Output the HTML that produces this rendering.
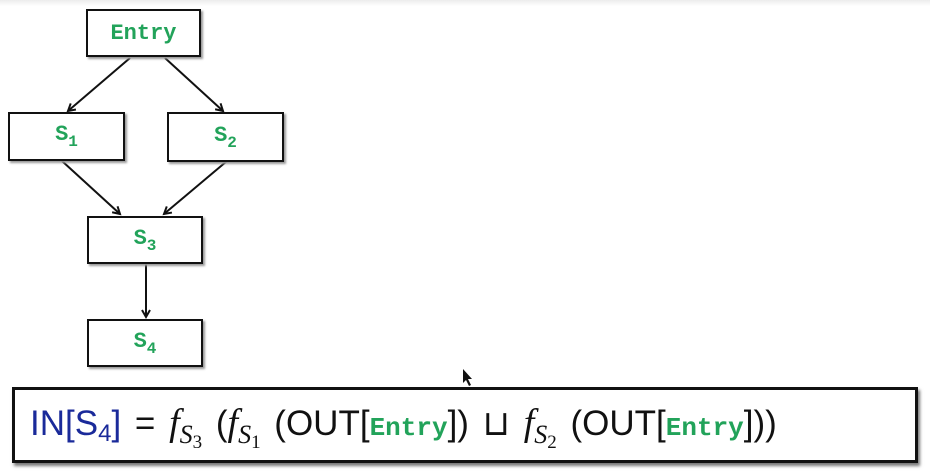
<!DOCTYPE html>
<html><head><meta charset="utf-8"><style>
body{margin:0;width:930px;height:474px;background:#fff;position:relative;overflow:hidden;font-family:"Liberation Sans",sans-serif}
.top{position:absolute;left:0;top:0;width:930px;height:6px;background:linear-gradient(#ececec,#fff)}
.b{position:absolute;border:2px solid #111;box-shadow:2px 2px 2px #999;background:#fff;color:#22a35a;font-family:"Liberation Mono",monospace;font-weight:bold;font-size:22px;display:flex;align-items:center;justify-content:center}
.b sub{font-size:16px;vertical-align:-6px}
.f{position:absolute;left:12px;top:387px;width:900px;height:70px;border:3px solid #111;box-shadow:2px 3px 3px #777;background:#fff}
.t{position:absolute;left:15px;top:11px;font-family:"Liberation Sans Narrow","Liberation Sans",sans-serif;font-size:35px;color:#111;white-space:nowrap;word-spacing:4px}
.blue{color:#1a2a9a}.g{color:#22a35a;font-family:"Liberation Mono",monospace;font-weight:bold;font-size:26px}
i{font-family:"Liberation Serif",serif;font-size:38px}
.t sub{font-size:26px;font-style:italic;font-family:"Liberation Serif",serif;vertical-align:-8px}
.t sub sub{font-size:19px;font-style:normal;vertical-align:-5px}
</style></head><body>
<div class="top"></div>
<svg width="930" height="474" style="position:absolute;left:0;top:0">
<defs><marker id="a" markerWidth="10" markerHeight="10" refX="8" refY="5" orient="auto" markerUnits="userSpaceOnUse"><path d="M1,1 L8,5 L1,9" fill="none" stroke="#111" stroke-width="2"/></marker></defs>
<g stroke="#111" stroke-width="2" fill="none">
<line x1="130" y1="58" x2="68" y2="111" marker-end="url(#a)"/>
<line x1="165" y1="58" x2="223" y2="111" marker-end="url(#a)"/>
<line x1="62" y1="161" x2="120" y2="214" marker-end="url(#a)"/>
<line x1="227" y1="161" x2="164" y2="214" marker-end="url(#a)"/>
<line x1="146" y1="264" x2="146" y2="317" marker-end="url(#a)"/>
</g></svg>
<div class="b" style="left:86px;top:9px;width:111px;height:44px"><span>Entry</span></div>
<div class="b" style="left:8px;top:112px;width:113px;height:45px"><span>S<sub>1</sub></span></div>
<div class="b" style="left:167px;top:112px;width:113px;height:46px"><span>S<sub>2</sub></span></div>
<div class="b" style="left:87px;top:216px;width:112px;height:44px"><span>S<sub>3</sub></span></div>
<div class="b" style="left:87px;top:319px;width:112px;height:44px"><span>S<sub>4</sub></span></div>
<svg width="12" height="20" style="position:absolute;left:462px;top:368px"><path d="M1,1 L1,15 L4,12 L7,18 L9,17 L6,11 L10,11 Z" fill="#111"/></svg>
<div class="f"><div class="t"><span class="blue">IN[S<sub style="font-style:normal;font-family:inherit;font-size:24px;vertical-align:-6px">4</sub>]</span> = <i>f</i><sub>S<sub>3</sub></sub> (<i>f</i><sub>S<sub>1</sub></sub> (OUT[<span class="g">Entry</span>]) ⊔ <i>f</i><sub>S<sub>2</sub></sub> (OUT[<span class="g">Entry</span>]))</div></div>
</body></html>
